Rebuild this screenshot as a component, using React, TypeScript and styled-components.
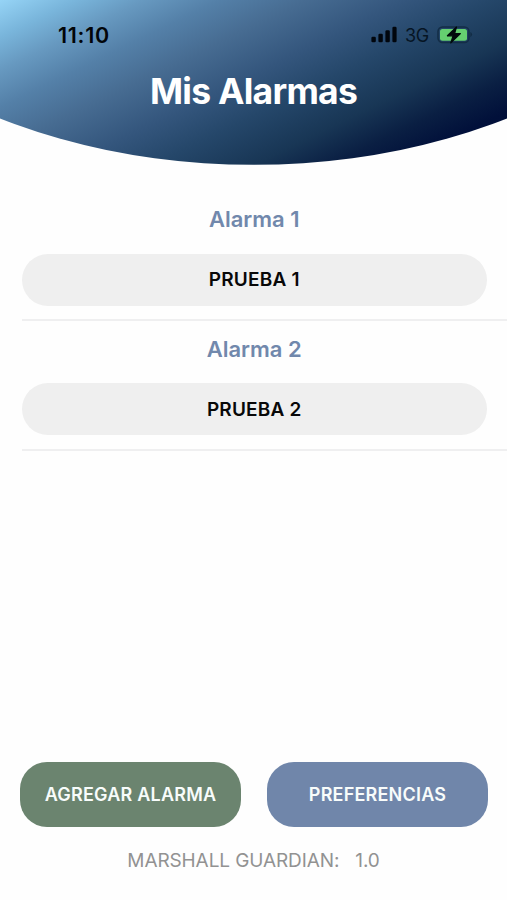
import React from "react";
import styled, { createGlobalStyle } from "styled-components";

const GlobalStyle = createGlobalStyle`
  * { box-sizing: border-box; }
  body { margin: 0; background: #fefefe; font-family: Inter, "Liberation Sans", sans-serif; }
`;

const Screen = styled.main`
  width: 507px;
  height: 900px;
  display: flex;
  flex-direction: column;
  overflow: hidden;
  background: #fefefe;
`;

const Header = styled.header`
  height: 165px;
  flex: none;
  background: linear-gradient(154deg, #96d4f6 0%, #79b5db 9%, #6799c0 17%, #5480a8 26%, #476c92 36%, #34567d 48%, #25476a 58%, #183655 70%, #0a1f43 79%, #01103a 87%, #000c35 100%);
  clip-path: ellipse(507px 346px at 50% -181.2px);
`;

const StatusBar = styled.div`
  display: flex;
  justify-content: space-between;
  align-items: center;
  height: 69px;
  padding: 0 34px 0 58px;
`;

const Clock = styled.time`
  font-size: 21.5px;
  font-weight: 600;
  letter-spacing: 0.7px;
  color: #020509;
`;

const Indicators = styled.div`
  display: flex;
  align-items: center;
`;

const Network = styled.span`
  margin: 1px 8px 0 8px;
  font-size: 18px;
  letter-spacing: -0.3px;
  color: #061524;
`;

const Title = styled.h1`
  margin: 0;
  text-align: center;
  font-size: 35.5px;
  line-height: 45px;
  font-weight: 700;
  letter-spacing: -0.75px;
  color: #fff;
`;

const AlarmList = styled.section`
  flex: 1;
  padding: 26.4px 0 0 22px;
`;

const AlarmItem = styled.article`
  height: 129.7px;
  padding: 14px 20.5px 0 0;
  border-bottom: 2px solid #efeff0;
`;

const AlarmName = styled.h2`
  margin: 0 0 20.4px;
  text-align: center;
  font-size: 22px;
  line-height: 28px;
  font-weight: 600;
  color: #7188ac;
`;

const AlarmButton = styled.button`
  display: block;
  width: 100%;
  height: 52px;
  border: 0;
  border-radius: 26px;
  background: #efefef;
  color: #080808;
  font: 600 19px Inter, "Liberation Sans", sans-serif;
  letter-spacing: 0.2px;
`;

const Actions = styled.nav`
  display: flex;
  gap: 26px;
  padding: 0 19px 0 20px;
`;

const ActionButton = styled.button<{ $color: string }>`
  flex: 1;
  height: 65px;
  border: 0;
  padding: 0;
  border-radius: 27px;
  background: ${({ $color }) => $color};
  color: #f8fcfb;
  font: 600 18px Inter, "Liberation Sans", sans-serif;
  letter-spacing: 0.2px;
`;

const Footer = styled.footer`
  display: flex;
  justify-content: center;
  gap: 16px;
  height: 73px;
  padding-top: 22px;
  font-size: 19px;
  line-height: 24px;
  letter-spacing: -0.1px;
  color: #929292;
`;

const SignalIcon = () => (
  <svg width="26" height="17" viewBox="0 0 26 17" fill="#01060d">
    <rect x="0.4" y="10.7" width="4.4" height="5.6" rx="1.3" />
    <rect x="7.4" y="7.7" width="4.4" height="8.6" rx="1.3" />
    <rect x="14.4" y="4.2" width="4.4" height="12.1" rx="1.3" />
    <rect x="21.4" y="0.7" width="4.2" height="15.6" rx="1.3" />
  </svg>
);

const BatteryIcon = () => (
  <svg width="36" height="18" viewBox="0 0 36 18">
    <rect x="1" y="1" width="31" height="15.5" rx="4.5" fill="none" stroke="#132d46" strokeWidth="1.5" />
    <rect x="3" y="3" width="27" height="11.7" rx="2.5" fill="#65cf70" />
    <path d="M33.3 6v5.2q1.8-.8 1.8-2.6T33.3 6Z" fill="#132d46" />
    <path d="M19.5 1 10.4 9.8h5.7L13.8 16.9l9.6-9.3h-5.8Z" fill="#020b0b" stroke="#020b0b" strokeWidth="1.2" strokeLinejoin="round" />
  </svg>
);

const alarms = [
  { name: "Alarma 1", label: "PRUEBA 1" },
  { name: "Alarma 2", label: "PRUEBA 2" },
];

export default function App() {
  return (
    <Screen>
      <GlobalStyle />
      <Header>
        <StatusBar>
          <Clock>11:10</Clock>
          <Indicators>
            <SignalIcon />
            <Network>3G</Network>
            <BatteryIcon />
          </Indicators>
        </StatusBar>
        <Title>Mis Alarmas</Title>
      </Header>
      <AlarmList>
        {alarms.map((alarm) => (
          <AlarmItem key={alarm.name}>
            <AlarmName>{alarm.name}</AlarmName>
            <AlarmButton>{alarm.label}</AlarmButton>
          </AlarmItem>
        ))}
      </AlarmList>
      <Actions>
        <ActionButton $color="#6b846f">AGREGAR ALARMA</ActionButton>
        <ActionButton $color="#7086aa">PREFERENCIAS</ActionButton>
      </Actions>
      <Footer>
        <span>MARSHALL GUARDIAN:</span>
        <span>1.0</span>
      </Footer>
    </Screen>
  );
}
